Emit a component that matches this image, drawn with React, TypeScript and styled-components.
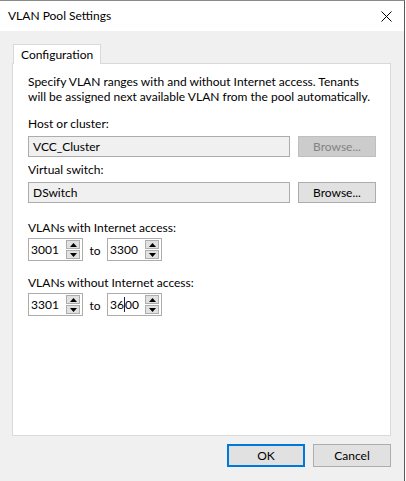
import React from "react";
import styled, { createGlobalStyle } from "styled-components";

const Global = createGlobalStyle`
  html, body {
    margin: 0;
    padding: 0;
    background: #ffffff;
  }
  body {
    font-family: Lato, "Noto Sans", "Liberation Sans", sans-serif;
    font-size: 12px;
    color: #000000;
  }
`;

const Window = styled.div`
  width: 405px;
  height: 481px;
  box-sizing: border-box;
  border-top: 1px solid #8a8a8a;
  border-right: 1px solid #5a5a5a;
  background: #f0f0f0;
  display: flex;
  flex-direction: column;
`;

const TitleBar = styled.div`
  height: 30px;
  background: #ffffff;
  display: flex;
  align-items: center;
  justify-content: space-between;
  padding: 0 12px 0 8px;
`;

const Title = styled.span`
  margin-top: -1px;
`;

const Body = styled.div`
  flex: 1;
  display: flex;
  flex-direction: column;
  padding: 12px 13px 0 12px;
`;

const TabStrip = styled.div`
  display: flex;
  height: 20px;
`;

const Tab = styled.div`
  background: #ffffff;
  border: 1px solid #d9d9d9;
  border-bottom: none;
  padding: 0 7px;
  margin-left: 1px;
  line-height: 19px;
  position: relative;
  top: 1px;
  z-index: 1;
`;

const Panel = styled.div`
  height: 373px;
  background: #ffffff;
  border: 1px solid #d9d9d9;
  padding: 10px 14px 0 15px;
  box-sizing: border-box;
`;

const Description = styled.div`
  line-height: 15px;
  white-space: nowrap;
`;

const Label = styled.div<{ $gap: number }>`
  line-height: 15px;
  margin-top: ${(p) => p.$gap}px;
`;

const FieldRow = styled.div`
  display: flex;
  gap: 8px;
  margin-top: 5px;
`;

const ReadOnlyBox = styled.div`
  width: 262px;
  height: 21px;
  box-sizing: border-box;
  border: 1px solid #acacac;
  background: #f0f0f0;
  padding-left: 4px;
  line-height: 19px;
`;

const Button = styled.div<{ $disabled?: boolean; $default?: boolean }>`
  width: 78px;
  height: 21px;
  box-sizing: border-box;
  display: flex;
  align-items: center;
  justify-content: center;
  background: ${(p) => (p.$disabled ? "#cccccc" : "#e1e1e1")};
  border: ${(p) =>
    p.$default ? "2px solid #0078d7" : p.$disabled ? "1px solid #bfbfbf" : "1px solid #adadad"};
  color: ${(p) => (p.$disabled ? "#838383" : "#000000")};
`;

const FooterButton = styled(Button)`
  height: 23px;
`;

const SpinRow = styled.div`
  display: flex;
  align-items: center;
  margin-top: 3px;
`;

const Spin = styled.div`
  width: 55px;
  height: 23px;
  box-sizing: border-box;
  border: 1px solid #acacac;
  background: #ffffff;
  display: flex;
  align-items: center;
  padding: 0 1px 0 2px;
`;

const SpinValue = styled.div`
  flex: 1;
  line-height: 19px;
  display: flex;
  align-items: center;
`;

const Caret = styled.span`
  display: inline-block;
  width: 1px;
  height: 15px;
  background: #1a1a6a;
`;

const Arrows = styled.div`
  display: flex;
  flex-direction: column;
  gap: 1px;
  margin-right: 1px;
`;

const ArrowButton = styled.div`
  width: 14px;
  height: 9px;
  box-sizing: border-box;
  border: 1px solid #adadad;
  background: #e1e1e1;
  display: flex;
  align-items: center;
  justify-content: center;
`;

const To = styled.span`
  width: 24px;
  text-align: center;
  margin-top: 2px;
`;

const Footer = styled.div`
  display: flex;
  justify-content: flex-end;
  gap: 8px;
  margin-top: 8px;
`;

const CloseIcon = () => (
  <svg width="11" height="11" viewBox="0 0 11 11">
    <path d="M0.5 0.5 L10.5 10.5 M10.5 0.5 L0.5 10.5" stroke="#000" strokeWidth="1" fill="none" />
  </svg>
);

const Triangle = ({ up }: { up?: boolean }) => (
  <svg width="7" height="4" viewBox="0 0 7 4">
    <path d={up ? "M0 4 L3.5 0 L7 4 Z" : "M0 0 L3.5 4 L7 0 Z"} fill="#000" />
  </svg>
);

const SpinBox = ({ value, caretAt }: { value: string; caretAt?: number }) => (
  <Spin>
    <SpinValue>
      {caretAt === undefined ? (
        value
      ) : (
        <>
          {value.slice(0, caretAt)}
          <Caret />
          {value.slice(caretAt)}
        </>
      )}
    </SpinValue>
    <Arrows>
      <ArrowButton>
        <Triangle up />
      </ArrowButton>
      <ArrowButton>
        <Triangle />
      </ArrowButton>
    </Arrows>
  </Spin>
);

export default function App() {
  return (
    <>
      <Global />
      <Window>
        <TitleBar>
          <Title>VLAN Pool Settings</Title>
          <CloseIcon />
        </TitleBar>
        <Body>
          <TabStrip>
            <Tab>Configuration</Tab>
          </TabStrip>
          <Panel>
            <Description>
              Specify VLAN ranges with and without Internet access. Tenants
              <br />
              will be assigned next available VLAN from the pool automatically.
            </Description>
            <Label $gap={12}>Host or cluster:</Label>
            <FieldRow>
              <ReadOnlyBox>VCC_Cluster</ReadOnlyBox>
              <Button $disabled>Browse...</Button>
            </FieldRow>
            <Label $gap={5}>Virtual switch:</Label>
            <FieldRow>
              <ReadOnlyBox>DSwitch</ReadOnlyBox>
              <Button>Browse...</Button>
            </FieldRow>
            <Label $gap={17}>VLANs with Internet access:</Label>
            <SpinRow>
              <SpinBox value="3001" />
              <To>to</To>
              <SpinBox value="3300" />
            </SpinRow>
            <Label $gap={14}>VLANs without Internet access:</Label>
            <SpinRow>
              <SpinBox value="3301" />
              <To>to</To>
              <SpinBox value="3600" caretAt={2} />
            </SpinRow>
          </Panel>
          <Footer>
            <FooterButton $default>OK</FooterButton>
            <FooterButton>Cancel</FooterButton>
          </Footer>
        </Body>
      </Window>
    </>
  );
}
